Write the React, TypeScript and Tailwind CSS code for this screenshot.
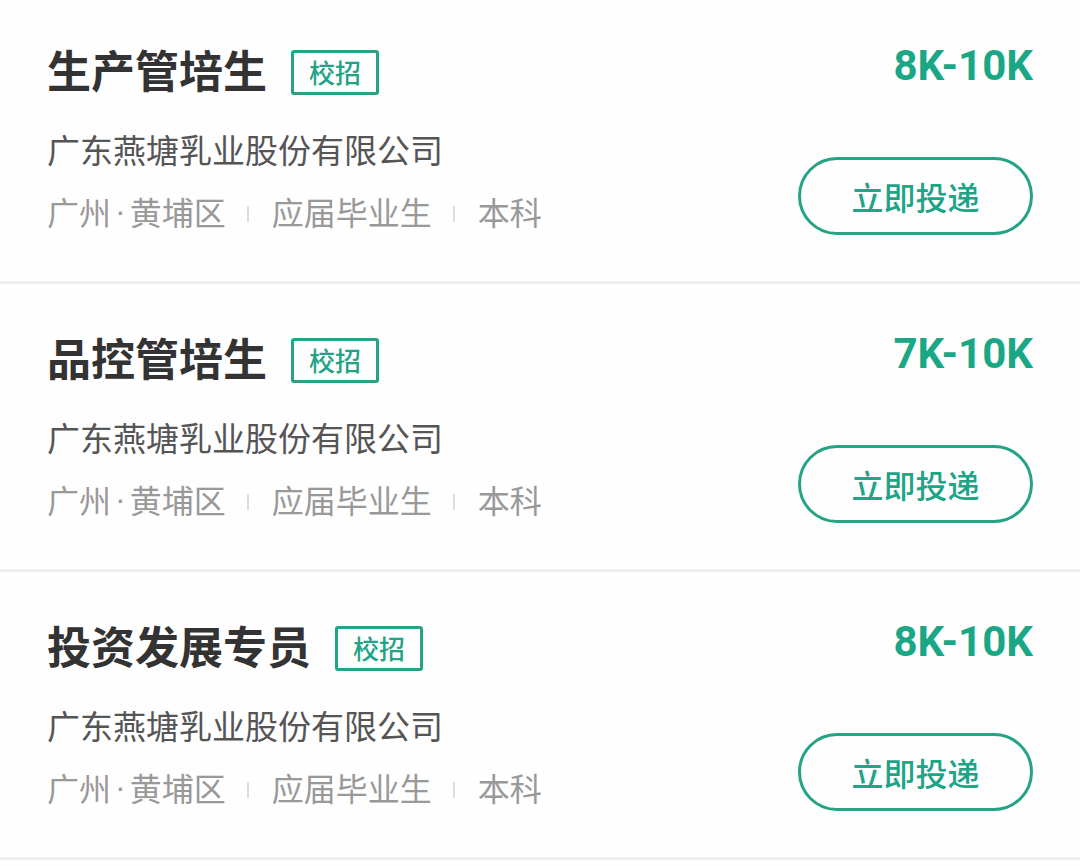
const jobs = [
  { title: "生产管培生", salary: "8K-10K" },
  { title: "品控管培生", salary: "7K-10K" },
  { title: "投资发展专员", salary: "8K-10K" },
];

const cjk = { fontFamily: '"Noto Sans CJK SC", "Noto Sans", sans-serif' };

function JobCard({ title, salary }: { title: string; salary: string }) {
  return (
    <div className="flex h-[285px] justify-between px-[47px]" style={cjk}>
      <div className="flex flex-col">
        <div className="mt-[45px] flex h-[56px] items-center gap-[24px]">
          <h1 className="text-[44px] leading-[56px] font-bold text-[#333333]">
            {title}
          </h1>
          <span className="mt-[6px] flex h-[45px] w-[88px] items-center justify-center rounded-[3px] border-[3px] border-[#26a286] text-[26px] leading-none font-medium text-[#1fa487]">
            校招
          </span>
        </div>
        <p className="mt-[30px] text-[33px] leading-[44px] text-[#555555]">
          广东燕塘乳业股份有限公司
        </p>
        <div className="mt-[18px] flex items-center text-[32px] leading-[44px] text-[#999999]">
          <span>广州</span>
          <span
            className="mx-[4px]"
            style={{ fontFamily: "'Liberation Sans', sans-serif" }}
          >
            ·
          </span>
          <span>黄埔区</span>
          <span className="mt-[6px] mr-[23px] ml-[21px] h-[16px] w-[2px] bg-[#dddddd]" />
          <span>应届毕业生</span>
          <span className="mt-[6px] mr-[23px] ml-[21px] h-[16px] w-[2px] bg-[#dddddd]" />
          <span>本科</span>
        </div>
      </div>
      <div className="flex flex-col items-end">
        <div
          className="mt-[45px] text-[42px] leading-[50px] font-bold text-[#1aa785]"
          style={{ fontFamily: "Roboto, 'Liberation Sans', sans-serif" }}
        >
          {salary}
        </div>
        <button className="mt-[66px] flex h-[78px] w-[235px] items-center justify-center rounded-full border-[3px] border-[#26a286] text-[32px] font-medium text-[#1fa487]">
          立即投递
        </button>
      </div>
    </div>
  );
}

export default function App() {
  return (
    <div className="h-[866px] w-[1080px] overflow-hidden bg-[#fefefe]">
      <div className="-mt-[4px]">
        {jobs.map((job) => (
          <div key={job.title}>
            <JobCard title={job.title} salary={job.salary} />
            <div className="h-[3px] bg-[#eeeeee]" />
          </div>
        ))}
      </div>
    </div>
  );
}
